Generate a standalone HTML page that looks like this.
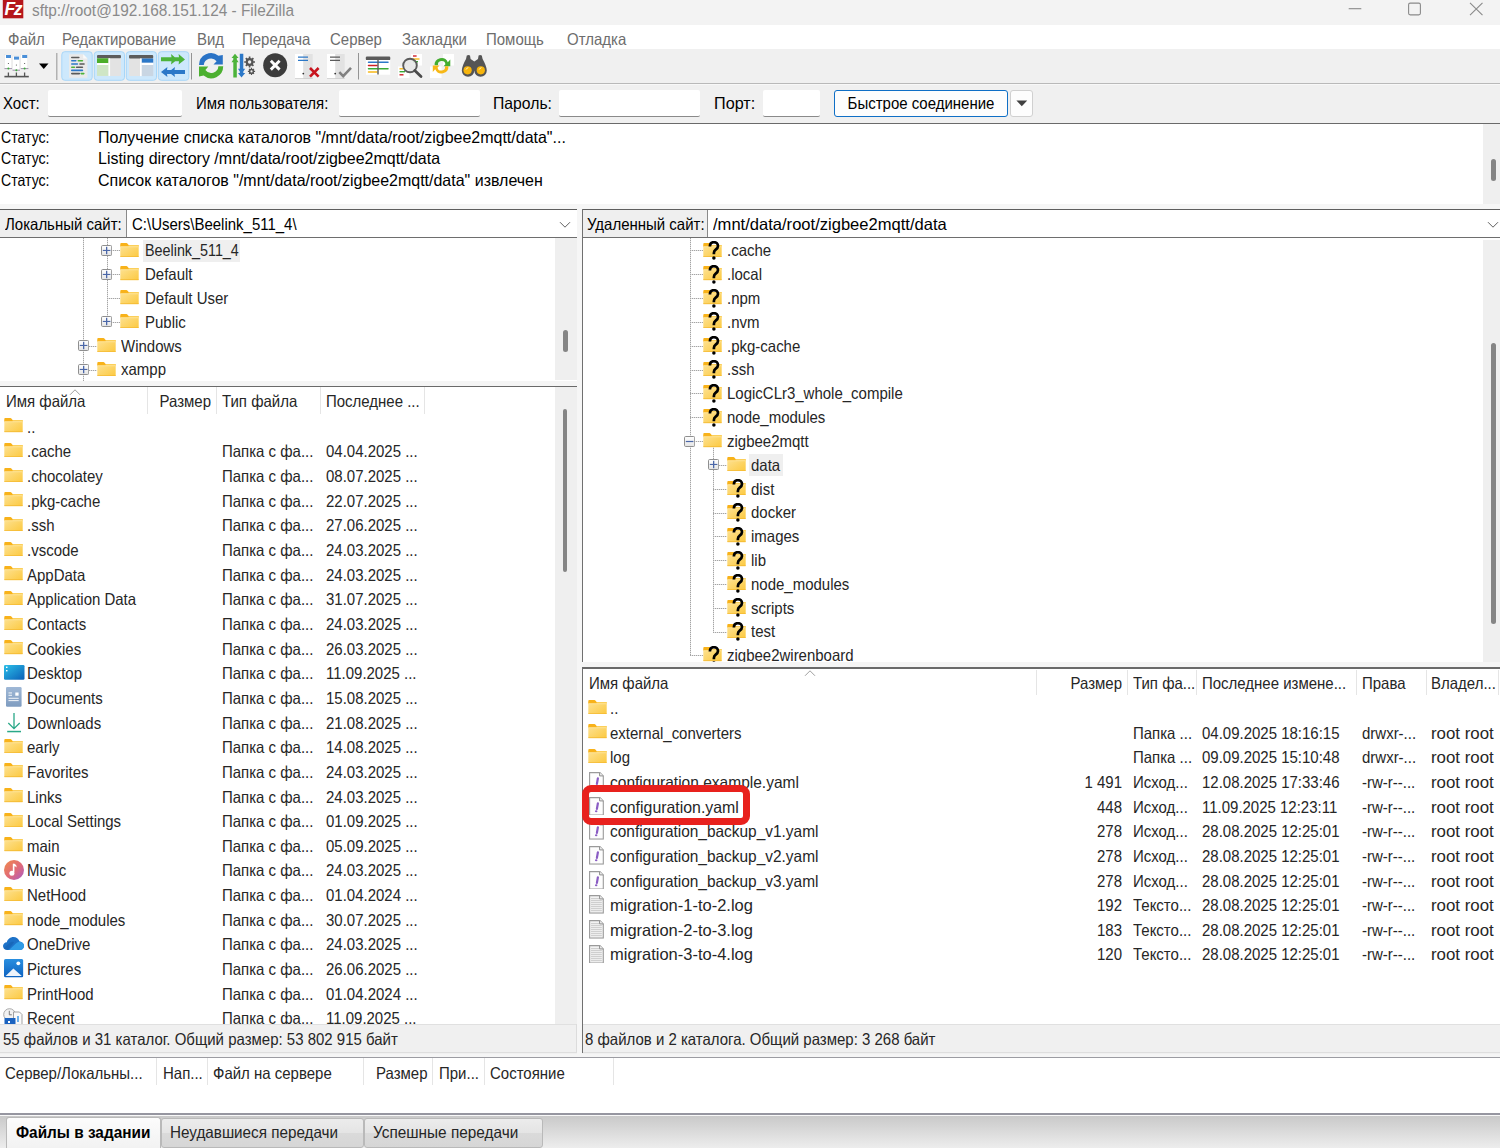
<!DOCTYPE html>
<html><head><meta charset="utf-8"><style>
html,body{margin:0;padding:0;}
body{width:1500px;height:1148px;position:relative;overflow:hidden;background:#f0f0f0;font-family:"Liberation Sans",sans-serif;}
body>div,body>svg{position:absolute;}
.t{white-space:pre;}
</style></head><body>
<svg width="0" height="0" style="position:absolute;left:0;top:0">
<defs>
<linearGradient id="gFold" x1="0" y1="0" x2="1" y2="1"><stop offset="0" stop-color="#fde294"/><stop offset="1" stop-color="#fcc940"/></linearGradient>
<linearGradient id="gBox" x1="0" y1="0" x2="0" y2="1"><stop offset="0" stop-color="#ffffff"/><stop offset="1" stop-color="#e4e4e4"/></linearGradient>
<linearGradient id="gDesk" x1="0" y1="0" x2="1" y2="1"><stop offset="0" stop-color="#2cc0e8"/><stop offset="1" stop-color="#0a5fb8"/></linearGradient>
<linearGradient id="gMusic" x1="0" y1="0" x2="1" y2="1"><stop offset="0" stop-color="#f08a4a"/><stop offset="0.55" stop-color="#e06a7a"/><stop offset="1" stop-color="#a85ac8"/></linearGradient>
<linearGradient id="gDoc" x1="0" y1="0" x2="0" y2="1"><stop offset="0" stop-color="#9fb8d6"/><stop offset="1" stop-color="#7f9cc0"/></linearGradient>
<linearGradient id="gPic" x1="0" y1="0" x2="0" y2="1"><stop offset="0" stop-color="#2a8fe0"/><stop offset="1" stop-color="#0d62c0"/></linearGradient>
<symbol id="fold" viewBox="0 0 19 14.5">
 <rect x="0.3" y="2" width="18.4" height="12.2" rx="0.6" fill="url(#gFold)"/>
 <rect x="7.8" y="2" width="10.9" height="1.5" fill="#fbcf5a"/>
 <path d="M0.3,3.4 V1 Q0.3,0.1 1.2,0.1 H6.4 Q7.1,0.1 7.6,0.8 L8.6,2 V3.4 Z" fill="#f8b21a"/>
 <rect x="0.6" y="3.4" width="17.8" height="0.8" fill="#ffe7a0"/>
 <rect x="0.3" y="13.3" width="18.4" height="0.9" fill="#f2b52c" opacity="0.85"/>
</symbol>
<symbol id="qm" viewBox="0 0 20 19">
 <path d="M6.9,5.6 C6.9,2.6 8.6,1.2 10.9,1.2 C13.3,1.2 15,2.8 15,5 C15,6.9 13.9,7.8 12.7,8.7 C11.6,9.5 10.9,10.2 10.9,12 V13.3" fill="none" stroke="#000" stroke-width="2.7"/>
 <circle cx="10.9" cy="17.1" r="1.75" fill="#000"/>
</symbol>
<symbol id="plus" viewBox="0 0 11.2 11">
 <rect x="0.5" y="0.5" width="10.2" height="10" rx="1.2" fill="url(#gBox)" stroke="#8f8f8f" stroke-width="1"/>
 <rect x="1.8" y="4.9" width="7.6" height="1.1" fill="#4b67a8"/>
 <rect x="5" y="1.8" width="1.3" height="7.4" fill="#4b67a8"/>
</symbol>
<symbol id="minus" viewBox="0 0 11.2 11">
 <rect x="0.5" y="0.5" width="10.2" height="10" rx="1.2" fill="url(#gBox)" stroke="#8f8f8f" stroke-width="1"/>
 <rect x="1.8" y="4.9" width="7.6" height="1.2" fill="#4b67a8"/>
</symbol>
<symbol id="yaml" viewBox="0 0 15 18.7">
 <path d="M0.6,0.6 H10.9 L14.3,4 V18.1 H0.6 Z" fill="#fdfdfd" stroke="#9a9a9a" stroke-width="1.1"/>
 <path d="M10.6,0.6 V3.9 H14.3" fill="#f4f4f4" stroke="#8c8c8c" stroke-width="1"/>
 <path d="M8.9,6.3 L7.9,11.9" stroke="#8a5cc4" stroke-width="2.2" stroke-linecap="round"/>
 <ellipse cx="7.2" cy="14.3" rx="1.25" ry="1.05" fill="#8a5cc4"/>
</symbol>
<symbol id="logf" viewBox="0 0 15 18.7">
 <path d="M0.6,0.6 H10.9 L14.3,4 V18.1 H0.6 Z" fill="#f2f2f2" stroke="#9a9a9a" stroke-width="1.1"/>
 <path d="M10.6,0.6 V3.9 H14.3" fill="#f4f4f4" stroke="#8c8c8c" stroke-width="1"/>
 <g fill="#c6c6c6"><rect x="2" y="3.2" width="8" height="0.9"/><rect x="2" y="5.2" width="10.8" height="0.9"/><rect x="2" y="7.2" width="10.8" height="0.9"/><rect x="2" y="9.2" width="10.8" height="0.9"/><rect x="2" y="11.2" width="10.8" height="0.9"/><rect x="2" y="13.2" width="10.8" height="0.9"/><rect x="2" y="15.2" width="10.8" height="0.9"/></g>
</symbol>
<symbol id="desk" viewBox="0 0 21 15">
 <rect x="0" y="0" width="20.5" height="14.8" rx="1.3" fill="url(#gDesk)"/>
 <rect x="2" y="1.6" width="1.5" height="1.4" fill="#fff"/><rect x="2" y="5" width="1.5" height="1.4" fill="#fff"/>
</symbol>
<symbol id="docs" viewBox="0 0 16 20">
 <rect x="0" y="0" width="15.6" height="19.8" rx="1.2" fill="url(#gDoc)"/>
 <g fill="#fff"><rect x="2.5" y="5.5" width="3.5" height="0.9"/><rect x="2.5" y="7.8" width="3.5" height="0.9"/><rect x="9.3" y="5.5" width="3.3" height="3.2"/><rect x="2.5" y="10.8" width="10.2" height="0.9"/><rect x="2.5" y="13.2" width="10.2" height="0.9"/></g>
</symbol>
<symbol id="down" viewBox="0 0 16 20">
 <path d="M8,0 V15.6 M2.3,10 L8,15.6 L13.7,10" fill="none" stroke="#2aa888" stroke-width="1.3"/>
 <rect x="1.2" y="17.8" width="13.8" height="1.5" fill="#2aa888"/>
</symbol>
<symbol id="music" viewBox="0 0 20 20">
 <circle cx="10" cy="10" r="10" fill="url(#gMusic)"/>
 <path d="M9.6,3.8 V12.2" stroke="#fff" stroke-width="1.6"/>
 <circle cx="7.9" cy="13.2" r="2.5" fill="#fff"/>
 <path d="M9.6,3.6 C11.2,4.2 12.8,5.2 12.6,7.4 C12,6.6 11.2,6.3 9.6,6.2 Z" fill="#fff"/>
</symbol>
<symbol id="cloud" viewBox="0 0 21 13">
 <path d="M4.3,13 C1.8,13 0,11.3 0,9.1 C0,7 1.7,5.3 3.8,5.2 C4.7,2.2 7.3,0 10.4,0 C13.3,0 15.7,1.9 16.6,4.5 C19.2,4.7 21,6.6 21,8.9 C21,11.2 19.1,13 16.7,13 Z" fill="#1d72c8"/>
 <path d="M6,13 L12.8,6.4 C14.3,5.1 15.6,4.6 17.4,4.7 C19.6,5.1 21,6.8 21,8.9 C21,11.2 19.1,13 16.7,13 Z" fill="#2f9be6"/>
 <path d="M0.6,11.2 L7.2,5.6 C8.4,4.7 9.9,4.6 11,5.2 L4.8,13 H4.3 C2.6,13 1.3,12.3 0.6,11.2 Z" fill="#1560b0" opacity="0.6"/>
</symbol>
<symbol id="pics" viewBox="0 0 19.5 18.5">
 <rect x="0" y="0" width="19.3" height="18.4" rx="1.6" fill="url(#gPic)"/>
 <path d="M1.6,17 L9.4,9.6 L17.8,17 Z" fill="#eef4fb"/>
 <circle cx="14.3" cy="4.3" r="1.9" fill="#fff"/>
</symbol>
<symbol id="recent" viewBox="0 0 21 17">
 <circle cx="6.5" cy="6.5" r="5.8" fill="#f2f2f2" stroke="#a0a0a0" stroke-width="0.9"/>
 <path d="M6.3,2.8 V6.8 H8.8" fill="none" stroke="#707070" stroke-width="0.9"/>
 <path d="M10.5,4 H16.5 L19,6.5 V17 H10.5 Z" fill="#fafafa" stroke="#999" stroke-width="0.9"/>
 <rect x="1.5" y="10" width="11" height="7" fill="#1b63c0"/>
 <rect x="14" y="8" width="2" height="6" fill="#6fb1ea"/>
 <rect x="5" y="13" width="2" height="2" fill="#fff"/>
</symbol>
</defs></svg>
<div style="left:0px;top:0px;width:1500px;height:25px;background:#f3f3f3"></div>
<div style="left:0px;top:25px;width:1500px;height:24px;background:#fff"></div>
<div style="left:0px;top:49px;width:1500px;height:34px;background:#f0f0f0"></div>
<div style="left:0px;top:83px;width:1500px;height:1px;background:#b9b9b9"></div>
<div style="left:0px;top:84px;width:1500px;height:1px;background:#f8f8f8"></div>
<div style="left:0px;top:85px;width:1500px;height:38px;background:#f0f0f0"></div>
<div style="left:0px;top:123px;width:1500px;height:1px;background:#6a6a6a"></div>
<div style="left:0px;top:124px;width:1500px;height:80px;background:#fff"></div>
<div style="left:1483px;top:124px;width:17px;height:80px;background:#efefef"></div>
<div style="left:1491px;top:159px;width:4.5px;height:22px;background:#858585;border-radius:3px"></div>
<div style="left:0px;top:204px;width:1500px;height:5px;background:#f6f6f6"></div>
<div style="left:0px;top:209px;width:577px;height:1.7px;background:#5e5e5e"></div>
<div style="left:0px;top:210.2px;width:125.5px;height:27px;background:#efefef"></div>
<div style="left:125.5px;top:210.2px;width:1px;height:27px;background:#8a8a8a"></div>
<div style="left:126.5px;top:210.2px;width:450.5px;height:27px;background:#fff"></div>
<div style="left:0px;top:237px;width:577px;height:1.3px;background:#6e6e6e"></div>
<div style="left:582px;top:209px;width:918px;height:1.7px;background:#5e5e5e"></div>
<div style="left:583px;top:210.2px;width:123.5px;height:27px;background:#efefef"></div>
<div style="left:706.5px;top:210.2px;width:1px;height:27px;background:#8a8a8a"></div>
<div style="left:707.5px;top:210.2px;width:792.5px;height:27px;background:#fff"></div>
<div style="left:582px;top:237px;width:918px;height:1.3px;background:#6e6e6e"></div>
<div style="left:577px;top:209px;width:5px;height:848px;background:#f6f6f6"></div>
<div style="left:582px;top:209px;width:1.3px;height:453px;background:#707070"></div>
<div style="left:582px;top:667.5px;width:1.3px;height:385px;background:#707070"></div>
<div style="left:0px;top:238px;width:577px;height:142.5px;background:#fff"></div>
<div style="left:554.5px;top:238px;width:22px;height:142px;background:#efefef"></div>
<div style="left:563.3px;top:329.5px;width:4.4px;height:22px;background:#858585;border-radius:3px"></div>
<div style="left:0px;top:380.5px;width:577px;height:5.3px;background:#f5f5f5"></div>
<div style="left:0px;top:385.6px;width:577px;height:1.7px;background:#6a6a6a"></div>
<div style="left:0px;top:387px;width:577px;height:637px;background:#fff"></div>
<div style="left:554.5px;top:387px;width:22px;height:637px;background:#efefef"></div>
<div style="left:563.2px;top:409px;width:4.3px;height:163px;background:#858585;border-radius:3px"></div>
<div style="left:583.3px;top:238px;width:917px;height:424px;background:#fff"></div>
<div style="left:1483px;top:240px;width:17px;height:422px;background:#efefef"></div>
<div style="left:1491px;top:342.7px;width:4.6px;height:281px;background:#858585;border-radius:3px"></div>
<div style="left:583.3px;top:662px;width:917px;height:5.5px;background:#f5f5f5"></div>
<div style="left:583.3px;top:667px;width:917px;height:1.3px;background:#6d6d6d"></div>
<div style="left:583.3px;top:668.3px;width:917px;height:356px;background:#fff"></div>
<div style="left:0px;top:1024px;width:577px;height:30px;background:#f0f0f0"></div>
<div style="left:583.3px;top:1024px;width:917px;height:30px;background:#f0f0f0"></div>
<div style="left:0px;top:1054px;width:1500px;height:3px;background:#f5f5f5"></div>
<div style="left:0px;top:1056.6px;width:1500px;height:1.4px;background:#9c9ca2"></div>
<div style="left:0px;top:1058px;width:1500px;height:56px;background:#fff"></div>
<div style="left:0px;top:1113px;width:1500px;height:2px;background:#9696a0"></div>
<div style="left:0px;top:1115px;width:1500px;height:1px;background:#f8f8f8"></div>
<div style="left:0px;top:1116px;width:1500px;height:32px;background:linear-gradient(#c9c9c9,#ededed)"></div>
<div class="t" style="top:0.02px;font-size:16.093px;line-height:20px;color:#8a8a8a;left:31.7px;transform:scaleX(0.9569377990430623);transform-origin:left center;">sftp://root@192.168.151.124 - FileZilla</div>
<div class="t" style="top:29.87px;font-size:15.674999999999999px;line-height:20px;color:#6d6d6d;left:8.3px;transform:scaleX(0.9569377990430623);transform-origin:left center;">Файл</div>
<div class="t" style="top:29.87px;font-size:15.674999999999999px;line-height:20px;color:#6d6d6d;left:62px;transform:scaleX(0.9569377990430623);transform-origin:left center;">Редактирование</div>
<div class="t" style="top:29.87px;font-size:15.674999999999999px;line-height:20px;color:#6d6d6d;left:197px;transform:scaleX(0.9569377990430623);transform-origin:left center;">Вид</div>
<div class="t" style="top:29.87px;font-size:15.674999999999999px;line-height:20px;color:#6d6d6d;left:242px;transform:scaleX(0.9569377990430623);transform-origin:left center;">Передача</div>
<div class="t" style="top:29.87px;font-size:15.674999999999999px;line-height:20px;color:#6d6d6d;left:330px;transform:scaleX(0.9569377990430623);transform-origin:left center;">Сервер</div>
<div class="t" style="top:29.87px;font-size:15.674999999999999px;line-height:20px;color:#6d6d6d;left:402px;transform:scaleX(0.9569377990430623);transform-origin:left center;">Закладки</div>
<div class="t" style="top:29.87px;font-size:15.674999999999999px;line-height:20px;color:#6d6d6d;left:486px;transform:scaleX(0.9569377990430623);transform-origin:left center;">Помощь</div>
<div class="t" style="top:29.87px;font-size:15.674999999999999px;line-height:20px;color:#6d6d6d;left:567px;transform:scaleX(0.9569377990430623);transform-origin:left center;">Отладка</div>
<div class="t" style="top:94.47px;font-size:15.674999999999999px;line-height:20px;color:#000;left:3px;transform:scaleX(0.9569377990430623);transform-origin:left center;">Хост:</div>
<div class="t" style="top:94.47px;font-size:15.674999999999999px;line-height:20px;color:#000;left:196px;transform:scaleX(0.9569377990430623);transform-origin:left center;">Имя пользователя:</div>
<div class="t" style="top:94.47px;font-size:15.674999999999999px;line-height:20px;color:#000;left:493px;transform:scaleX(1.0047846889952154);transform-origin:left center;">Пароль:</div>
<div class="t" style="top:94.47px;font-size:15.674999999999999px;line-height:20px;color:#000;left:714px;transform:scaleX(1.0334928229665072);transform-origin:left center;">Порт:</div>
<div style="left:47.5px;top:90.4px;width:134.5px;height:27px;background:#fff;border-bottom:1px solid #8a8a8a;box-sizing:border-box;border-radius:2px"></div>
<div style="left:339px;top:90.4px;width:141px;height:27px;background:#fff;border-bottom:1px solid #8a8a8a;box-sizing:border-box;border-radius:2px"></div>
<div style="left:559px;top:90.4px;width:141px;height:27px;background:#fff;border-bottom:1px solid #8a8a8a;box-sizing:border-box;border-radius:2px"></div>
<div style="left:762.7px;top:90.4px;width:57.3px;height:27px;background:#fff;border-bottom:1px solid #8a8a8a;box-sizing:border-box;border-radius:2px"></div>
<div style="left:834px;top:90.4px;width:173.7px;height:27.1px;background:#fdfdfd;border:1px solid #0f6fc6;box-sizing:border-box;border-radius:3px"></div>
<div class="t" style="top:94.47px;font-size:15.674999999999999px;line-height:20px;color:#000;left:620.5px;width:600px;text-align:center;transform:scaleX(0.9569377990430623);transform-origin:center center;">Быстрое соединение</div>
<div style="left:1009.7px;top:90.4px;width:23.3px;height:27.1px;background:#fdfdfd;border:1px solid #d0d0d0;box-sizing:border-box;border-radius:3px"></div>
<div class="t" style="top:128.00px;font-size:16.72px;line-height:20px;color:#000;left:1.2px;transform:scaleX(0.8449760765550239);transform-origin:left center;">Статус:</div>
<div class="t" style="top:128.00px;font-size:16.72px;line-height:20px;color:#000;left:97.5px;transform:scaleX(0.9569377990430623);transform-origin:left center;">Получение списка каталогов "/mnt/data/root/zigbee2mqtt/data"...</div>
<div class="t" style="top:149.40px;font-size:16.72px;line-height:20px;color:#000;left:1.2px;transform:scaleX(0.8449760765550239);transform-origin:left center;">Статус:</div>
<div class="t" style="top:149.40px;font-size:16.72px;line-height:20px;color:#000;left:97.5px;transform:scaleX(0.9569377990430623);transform-origin:left center;">Listing directory /mnt/data/root/zigbee2mqtt/data</div>
<div class="t" style="top:170.80px;font-size:16.72px;line-height:20px;color:#000;left:1.2px;transform:scaleX(0.8449760765550239);transform-origin:left center;">Статус:</div>
<div class="t" style="top:170.80px;font-size:16.72px;line-height:20px;color:#000;left:97.5px;transform:scaleX(0.9569377990430623);transform-origin:left center;">Список каталогов "/mnt/data/root/zigbee2mqtt/data" извлечен</div>
<div class="t" style="top:215.27px;font-size:15.674999999999999px;line-height:20px;color:#000;left:5px;transform:scaleX(0.9569377990430623);transform-origin:left center;">Локальный сайт:</div>
<div class="t" style="top:215.27px;font-size:15.674999999999999px;line-height:20px;color:#000;left:132px;transform:scaleX(0.9569377990430623);transform-origin:left center;">C:\Users\Beelink_511_4\</div>
<div class="t" style="top:215.27px;font-size:15.674999999999999px;line-height:20px;color:#000;left:587px;transform:scaleX(0.9569377990430623);transform-origin:left center;">Удаленный сайт:</div>
<div class="t" style="top:215.27px;font-size:15.674999999999999px;line-height:20px;color:#000;left:713px;transform:scaleX(1.0574162679425838);transform-origin:left center;">/mnt/data/root/zigbee2mqtt/data</div>
<div style="left:83px;top:238px;width:1px;height:142.5px;background:repeating-linear-gradient(to bottom,#a4a4a4 0 1px,#e2e2e2 1px 2px)"></div>
<div style="left:106.5px;top:238px;width:1px;height:84.15999999999997px;background:repeating-linear-gradient(to bottom,#a4a4a4 0 1px,#e2e2e2 1px 2px)"></div>
<div style="left:143px;top:240.0px;width:97px;height:21.5px;background:#efefef"></div>
<div style="left:106.6px;top:250px;width:13.400000000000006px;height:1px;background:repeating-linear-gradient(to right,#a4a4a4 0 1px,#e2e2e2 1px 2px)"></div>
<svg style="position:absolute;left:101.1px;top:245.0px" width="11.2" height="11"><use href="#plus" width="11.2" height="11"/></svg>
<svg style="position:absolute;left:120px;top:242.5px" width="19" height="14.5"><use href="#fold" width="19" height="14.5"/></svg>
<div class="t" style="top:241.27px;font-size:15.674999999999999px;line-height:20px;color:#262626;left:145px;transform:scaleX(0.9157894736842106);transform-origin:left center;">Beelink_511_4</div>
<div style="left:106.6px;top:274px;width:13.400000000000006px;height:1px;background:repeating-linear-gradient(to right,#a4a4a4 0 1px,#e2e2e2 1px 2px)"></div>
<svg style="position:absolute;left:101.1px;top:268.82px" width="11.2" height="11"><use href="#plus" width="11.2" height="11"/></svg>
<svg style="position:absolute;left:120px;top:266.32px" width="19" height="14.5"><use href="#fold" width="19" height="14.5"/></svg>
<div class="t" style="top:265.09px;font-size:15.674999999999999px;line-height:20px;color:#262626;left:145px;transform:scaleX(0.9569377990430623);transform-origin:left center;">Default</div>
<div style="left:106.6px;top:298px;width:13.400000000000006px;height:1px;background:repeating-linear-gradient(to right,#a4a4a4 0 1px,#e2e2e2 1px 2px)"></div>
<svg style="position:absolute;left:120px;top:290.14px" width="19" height="14.5"><use href="#fold" width="19" height="14.5"/></svg>
<div class="t" style="top:288.91px;font-size:15.674999999999999px;line-height:20px;color:#262626;left:145px;transform:scaleX(0.9569377990430623);transform-origin:left center;">Default User</div>
<div style="left:106.6px;top:322px;width:13.400000000000006px;height:1px;background:repeating-linear-gradient(to right,#a4a4a4 0 1px,#e2e2e2 1px 2px)"></div>
<svg style="position:absolute;left:101.1px;top:316.46px" width="11.2" height="11"><use href="#plus" width="11.2" height="11"/></svg>
<svg style="position:absolute;left:120px;top:313.96px" width="19" height="14.5"><use href="#fold" width="19" height="14.5"/></svg>
<div class="t" style="top:312.73px;font-size:15.674999999999999px;line-height:20px;color:#262626;left:145px;transform:scaleX(0.9569377990430623);transform-origin:left center;">Public</div>
<div style="left:83.3px;top:346px;width:13.400000000000006px;height:1px;background:repeating-linear-gradient(to right,#a4a4a4 0 1px,#e2e2e2 1px 2px)"></div>
<svg style="position:absolute;left:77.8px;top:340.28000000000003px" width="11.2" height="11"><use href="#plus" width="11.2" height="11"/></svg>
<svg style="position:absolute;left:96.7px;top:337.78000000000003px" width="19" height="14.5"><use href="#fold" width="19" height="14.5"/></svg>
<div class="t" style="top:336.55px;font-size:15.674999999999999px;line-height:20px;color:#262626;left:121px;transform:scaleX(0.9569377990430623);transform-origin:left center;">Windows</div>
<div style="left:83.3px;top:370px;width:13.400000000000006px;height:1px;background:repeating-linear-gradient(to right,#a4a4a4 0 1px,#e2e2e2 1px 2px)"></div>
<svg style="position:absolute;left:77.8px;top:364.09999999999997px" width="11.2" height="11"><use href="#plus" width="11.2" height="11"/></svg>
<svg style="position:absolute;left:96.7px;top:361.59999999999997px" width="19" height="14.5"><use href="#fold" width="19" height="14.5"/></svg>
<div class="t" style="top:360.37px;font-size:15.674999999999999px;line-height:20px;color:#262626;left:121px;transform:scaleX(0.9569377990430623);transform-origin:left center;">xampp</div>
<div style="left:689.5px;top:238px;width:1px;height:417.44000000000005px;background:repeating-linear-gradient(to bottom,#a4a4a4 0 1px,#e2e2e2 1px 2px)"></div>
<div style="left:713px;top:446.46000000000004px;width:1px;height:185.15999999999997px;background:repeating-linear-gradient(to bottom,#a4a4a4 0 1px,#e2e2e2 1px 2px)"></div>
<div style="left:689.5px;top:250px;width:13.5px;height:1px;background:repeating-linear-gradient(to right,#a4a4a4 0 1px,#e2e2e2 1px 2px)"></div>
<svg style="position:absolute;left:703px;top:242.5px" width="19" height="14.5"><use href="#fold" width="19" height="14.5"/></svg>
<svg style="position:absolute;left:703px;top:241.0px" width="20" height="19"><use href="#qm" width="20" height="19"/></svg>
<div class="t" style="top:241.37px;font-size:15.674999999999999px;line-height:20px;color:#262626;left:727px;transform:scaleX(0.9569377990430623);transform-origin:left center;">.cache</div>
<div style="left:689.5px;top:274px;width:13.5px;height:1px;background:repeating-linear-gradient(to right,#a4a4a4 0 1px,#e2e2e2 1px 2px)"></div>
<svg style="position:absolute;left:703px;top:266.32000000000005px" width="19" height="14.5"><use href="#fold" width="19" height="14.5"/></svg>
<svg style="position:absolute;left:703px;top:264.82000000000005px" width="20" height="19"><use href="#qm" width="20" height="19"/></svg>
<div class="t" style="top:265.19px;font-size:15.674999999999999px;line-height:20px;color:#262626;left:727px;transform:scaleX(0.9569377990430623);transform-origin:left center;">.local</div>
<div style="left:689.5px;top:298px;width:13.5px;height:1px;background:repeating-linear-gradient(to right,#a4a4a4 0 1px,#e2e2e2 1px 2px)"></div>
<svg style="position:absolute;left:703px;top:290.14000000000004px" width="19" height="14.5"><use href="#fold" width="19" height="14.5"/></svg>
<svg style="position:absolute;left:703px;top:288.64000000000004px" width="20" height="19"><use href="#qm" width="20" height="19"/></svg>
<div class="t" style="top:289.01px;font-size:15.674999999999999px;line-height:20px;color:#262626;left:727px;transform:scaleX(0.9569377990430623);transform-origin:left center;">.npm</div>
<div style="left:689.5px;top:322px;width:13.5px;height:1px;background:repeating-linear-gradient(to right,#a4a4a4 0 1px,#e2e2e2 1px 2px)"></div>
<svg style="position:absolute;left:703px;top:313.96000000000004px" width="19" height="14.5"><use href="#fold" width="19" height="14.5"/></svg>
<svg style="position:absolute;left:703px;top:312.46000000000004px" width="20" height="19"><use href="#qm" width="20" height="19"/></svg>
<div class="t" style="top:312.83px;font-size:15.674999999999999px;line-height:20px;color:#262626;left:727px;transform:scaleX(0.9569377990430623);transform-origin:left center;">.nvm</div>
<div style="left:689.5px;top:346px;width:13.5px;height:1px;background:repeating-linear-gradient(to right,#a4a4a4 0 1px,#e2e2e2 1px 2px)"></div>
<svg style="position:absolute;left:703px;top:337.78000000000003px" width="19" height="14.5"><use href="#fold" width="19" height="14.5"/></svg>
<svg style="position:absolute;left:703px;top:336.28000000000003px" width="20" height="19"><use href="#qm" width="20" height="19"/></svg>
<div class="t" style="top:336.65px;font-size:15.674999999999999px;line-height:20px;color:#262626;left:727px;transform:scaleX(0.9569377990430623);transform-origin:left center;">.pkg-cache</div>
<div style="left:689.5px;top:370px;width:13.5px;height:1px;background:repeating-linear-gradient(to right,#a4a4a4 0 1px,#e2e2e2 1px 2px)"></div>
<svg style="position:absolute;left:703px;top:361.6px" width="19" height="14.5"><use href="#fold" width="19" height="14.5"/></svg>
<svg style="position:absolute;left:703px;top:360.1px" width="20" height="19"><use href="#qm" width="20" height="19"/></svg>
<div class="t" style="top:360.47px;font-size:15.674999999999999px;line-height:20px;color:#262626;left:727px;transform:scaleX(0.9569377990430623);transform-origin:left center;">.ssh</div>
<div style="left:689.5px;top:393px;width:13.5px;height:1px;background:repeating-linear-gradient(to right,#a4a4a4 0 1px,#e2e2e2 1px 2px)"></div>
<svg style="position:absolute;left:703px;top:385.4200000000001px" width="19" height="14.5"><use href="#fold" width="19" height="14.5"/></svg>
<svg style="position:absolute;left:703px;top:383.9200000000001px" width="20" height="19"><use href="#qm" width="20" height="19"/></svg>
<div class="t" style="top:384.29px;font-size:15.674999999999999px;line-height:20px;color:#262626;left:727px;transform:scaleX(0.9569377990430623);transform-origin:left center;">LogicCLr3_whole_compile</div>
<div style="left:689.5px;top:417px;width:13.5px;height:1px;background:repeating-linear-gradient(to right,#a4a4a4 0 1px,#e2e2e2 1px 2px)"></div>
<svg style="position:absolute;left:703px;top:409.24px" width="19" height="14.5"><use href="#fold" width="19" height="14.5"/></svg>
<svg style="position:absolute;left:703px;top:407.74px" width="20" height="19"><use href="#qm" width="20" height="19"/></svg>
<div class="t" style="top:408.11px;font-size:15.674999999999999px;line-height:20px;color:#262626;left:727px;transform:scaleX(0.9569377990430623);transform-origin:left center;">node_modules</div>
<div style="left:689.5px;top:441px;width:13.5px;height:1px;background:repeating-linear-gradient(to right,#a4a4a4 0 1px,#e2e2e2 1px 2px)"></div>
<svg style="position:absolute;left:684.2px;top:435.66px" width="11.2" height="11"><use href="#minus" width="11.2" height="11"/></svg>
<svg style="position:absolute;left:703px;top:433.06000000000006px" width="19" height="14.5"><use href="#fold" width="19" height="14.5"/></svg>
<div class="t" style="top:431.93px;font-size:15.674999999999999px;line-height:20px;color:#262626;left:727px;transform:scaleX(0.9569377990430623);transform-origin:left center;">zigbee2mqtt</div>
<div style="left:749px;top:454.47999999999996px;width:34px;height:21.5px;background:#efefef"></div>
<div style="left:713px;top:465px;width:14px;height:1px;background:repeating-linear-gradient(to right,#a4a4a4 0 1px,#e2e2e2 1px 2px)"></div>
<svg style="position:absolute;left:707.5px;top:459.47999999999996px" width="11.2" height="11"><use href="#plus" width="11.2" height="11"/></svg>
<svg style="position:absolute;left:727px;top:456.88px" width="19" height="14.5"><use href="#fold" width="19" height="14.5"/></svg>
<div class="t" style="top:455.75px;font-size:15.674999999999999px;line-height:20px;color:#262626;left:751px;transform:scaleX(0.9569377990430623);transform-origin:left center;">data</div>
<div style="left:713px;top:489px;width:14px;height:1px;background:repeating-linear-gradient(to right,#a4a4a4 0 1px,#e2e2e2 1px 2px)"></div>
<svg style="position:absolute;left:727px;top:480.70000000000005px" width="19" height="14.5"><use href="#fold" width="19" height="14.5"/></svg>
<svg style="position:absolute;left:727px;top:479.20000000000005px" width="20" height="19"><use href="#qm" width="20" height="19"/></svg>
<div class="t" style="top:479.57px;font-size:15.674999999999999px;line-height:20px;color:#262626;left:751px;transform:scaleX(0.9569377990430623);transform-origin:left center;">dist</div>
<div style="left:713px;top:513px;width:14px;height:1px;background:repeating-linear-gradient(to right,#a4a4a4 0 1px,#e2e2e2 1px 2px)"></div>
<svg style="position:absolute;left:727px;top:504.52px" width="19" height="14.5"><use href="#fold" width="19" height="14.5"/></svg>
<svg style="position:absolute;left:727px;top:503.02px" width="20" height="19"><use href="#qm" width="20" height="19"/></svg>
<div class="t" style="top:503.39px;font-size:15.674999999999999px;line-height:20px;color:#262626;left:751px;transform:scaleX(0.9569377990430623);transform-origin:left center;">docker</div>
<div style="left:713px;top:536px;width:14px;height:1px;background:repeating-linear-gradient(to right,#a4a4a4 0 1px,#e2e2e2 1px 2px)"></div>
<svg style="position:absolute;left:727px;top:528.34px" width="19" height="14.5"><use href="#fold" width="19" height="14.5"/></svg>
<svg style="position:absolute;left:727px;top:526.84px" width="20" height="19"><use href="#qm" width="20" height="19"/></svg>
<div class="t" style="top:527.21px;font-size:15.674999999999999px;line-height:20px;color:#262626;left:751px;transform:scaleX(0.9569377990430623);transform-origin:left center;">images</div>
<div style="left:713px;top:560px;width:14px;height:1px;background:repeating-linear-gradient(to right,#a4a4a4 0 1px,#e2e2e2 1px 2px)"></div>
<svg style="position:absolute;left:727px;top:552.1600000000001px" width="19" height="14.5"><use href="#fold" width="19" height="14.5"/></svg>
<svg style="position:absolute;left:727px;top:550.6600000000001px" width="20" height="19"><use href="#qm" width="20" height="19"/></svg>
<div class="t" style="top:551.03px;font-size:15.674999999999999px;line-height:20px;color:#262626;left:751px;transform:scaleX(0.9569377990430623);transform-origin:left center;">lib</div>
<div style="left:713px;top:584px;width:14px;height:1px;background:repeating-linear-gradient(to right,#a4a4a4 0 1px,#e2e2e2 1px 2px)"></div>
<svg style="position:absolute;left:727px;top:575.98px" width="19" height="14.5"><use href="#fold" width="19" height="14.5"/></svg>
<svg style="position:absolute;left:727px;top:574.48px" width="20" height="19"><use href="#qm" width="20" height="19"/></svg>
<div class="t" style="top:574.85px;font-size:15.674999999999999px;line-height:20px;color:#262626;left:751px;transform:scaleX(0.9569377990430623);transform-origin:left center;">node_modules</div>
<div style="left:713px;top:608px;width:14px;height:1px;background:repeating-linear-gradient(to right,#a4a4a4 0 1px,#e2e2e2 1px 2px)"></div>
<svg style="position:absolute;left:727px;top:599.8000000000001px" width="19" height="14.5"><use href="#fold" width="19" height="14.5"/></svg>
<svg style="position:absolute;left:727px;top:598.3000000000001px" width="20" height="19"><use href="#qm" width="20" height="19"/></svg>
<div class="t" style="top:598.67px;font-size:15.674999999999999px;line-height:20px;color:#262626;left:751px;transform:scaleX(0.9569377990430623);transform-origin:left center;">scripts</div>
<div style="left:713px;top:632px;width:14px;height:1px;background:repeating-linear-gradient(to right,#a4a4a4 0 1px,#e2e2e2 1px 2px)"></div>
<svg style="position:absolute;left:727px;top:623.62px" width="19" height="14.5"><use href="#fold" width="19" height="14.5"/></svg>
<svg style="position:absolute;left:727px;top:622.12px" width="20" height="19"><use href="#qm" width="20" height="19"/></svg>
<div class="t" style="top:622.49px;font-size:15.674999999999999px;line-height:20px;color:#262626;left:751px;transform:scaleX(0.9569377990430623);transform-origin:left center;">test</div>
<div style="left:689.5px;top:655px;width:13.5px;height:1px;background:repeating-linear-gradient(to right,#a4a4a4 0 1px,#e2e2e2 1px 2px)"></div>
<svg style="position:absolute;left:703px;top:647.44px" width="19" height="14.5"><use href="#fold" width="19" height="14.5"/></svg>
<svg style="position:absolute;left:703px;top:645.94px" width="20" height="19"><use href="#qm" width="20" height="19"/></svg>
<div class="t" style="top:646.31px;font-size:15.674999999999999px;line-height:20px;color:#262626;left:727px;transform:scaleX(0.9569377990430623);transform-origin:left center;">zigbee2wirenboard</div>
<div class="t" style="top:391.77px;font-size:15.674999999999999px;line-height:20px;color:#262626;left:6px;transform:scaleX(0.9569377990430623);transform-origin:left center;">Имя файла</div>
<div class="t" style="top:391.77px;font-size:15.674999999999999px;line-height:20px;color:#262626;left:-389.5px;width:600px;text-align:right;transform:scaleX(0.9569377990430623);transform-origin:right center;">Размер</div>
<div class="t" style="top:391.77px;font-size:15.674999999999999px;line-height:20px;color:#262626;left:222px;transform:scaleX(0.9569377990430623);transform-origin:left center;">Тип файла</div>
<div class="t" style="top:391.77px;font-size:15.674999999999999px;line-height:20px;color:#262626;left:325.6px;transform:scaleX(0.9569377990430623);transform-origin:left center;">Последнее ...</div>
<div style="left:147px;top:387px;width:1px;height:27px;background:#e5e5e5"></div>
<div style="left:215.6px;top:387px;width:1px;height:27px;background:#e5e5e5"></div>
<div style="left:319.6px;top:387px;width:1px;height:27px;background:#e5e5e5"></div>
<div style="left:423.6px;top:387px;width:1px;height:27px;background:#e5e5e5"></div>
<svg style="position:absolute;left:4.3px;top:418.3px" width="19" height="14.5"><use href="#fold" width="19" height="14.5"/></svg>
<div class="t" style="top:417.77px;font-size:15.674999999999999px;line-height:20px;color:#262626;left:26.5px;transform:scaleX(0.9569377990430623);transform-origin:left center;">..</div>
<svg style="position:absolute;left:4.3px;top:442.95px" width="19" height="14.5"><use href="#fold" width="19" height="14.5"/></svg>
<div class="t" style="top:442.42px;font-size:15.674999999999999px;line-height:20px;color:#262626;left:26.5px;transform:scaleX(0.9569377990430623);transform-origin:left center;">.cache</div>
<div class="t" style="top:442.42px;font-size:15.674999999999999px;line-height:20px;color:#262626;left:222px;transform:scaleX(0.9569377990430623);transform-origin:left center;">Папка с фа...</div>
<div class="t" style="top:442.42px;font-size:15.674999999999999px;line-height:20px;color:#262626;left:325.6px;transform:scaleX(0.9569377990430623);transform-origin:left center;">04.04.2025 ...</div>
<svg style="position:absolute;left:4.3px;top:467.6px" width="19" height="14.5"><use href="#fold" width="19" height="14.5"/></svg>
<div class="t" style="top:467.07px;font-size:15.674999999999999px;line-height:20px;color:#262626;left:26.5px;transform:scaleX(0.9569377990430623);transform-origin:left center;">.chocolatey</div>
<div class="t" style="top:467.07px;font-size:15.674999999999999px;line-height:20px;color:#262626;left:222px;transform:scaleX(0.9569377990430623);transform-origin:left center;">Папка с фа...</div>
<div class="t" style="top:467.07px;font-size:15.674999999999999px;line-height:20px;color:#262626;left:325.6px;transform:scaleX(0.9569377990430623);transform-origin:left center;">08.07.2025 ...</div>
<svg style="position:absolute;left:4.3px;top:492.25px" width="19" height="14.5"><use href="#fold" width="19" height="14.5"/></svg>
<div class="t" style="top:491.72px;font-size:15.674999999999999px;line-height:20px;color:#262626;left:26.5px;transform:scaleX(0.9569377990430623);transform-origin:left center;">.pkg-cache</div>
<div class="t" style="top:491.72px;font-size:15.674999999999999px;line-height:20px;color:#262626;left:222px;transform:scaleX(0.9569377990430623);transform-origin:left center;">Папка с фа...</div>
<div class="t" style="top:491.72px;font-size:15.674999999999999px;line-height:20px;color:#262626;left:325.6px;transform:scaleX(0.9569377990430623);transform-origin:left center;">22.07.2025 ...</div>
<svg style="position:absolute;left:4.3px;top:516.9px" width="19" height="14.5"><use href="#fold" width="19" height="14.5"/></svg>
<div class="t" style="top:516.37px;font-size:15.674999999999999px;line-height:20px;color:#262626;left:26.5px;transform:scaleX(0.9569377990430623);transform-origin:left center;">.ssh</div>
<div class="t" style="top:516.37px;font-size:15.674999999999999px;line-height:20px;color:#262626;left:222px;transform:scaleX(0.9569377990430623);transform-origin:left center;">Папка с фа...</div>
<div class="t" style="top:516.37px;font-size:15.674999999999999px;line-height:20px;color:#262626;left:325.6px;transform:scaleX(0.9569377990430623);transform-origin:left center;">27.06.2025 ...</div>
<svg style="position:absolute;left:4.3px;top:541.55px" width="19" height="14.5"><use href="#fold" width="19" height="14.5"/></svg>
<div class="t" style="top:541.02px;font-size:15.674999999999999px;line-height:20px;color:#262626;left:26.5px;transform:scaleX(0.9569377990430623);transform-origin:left center;">.vscode</div>
<div class="t" style="top:541.02px;font-size:15.674999999999999px;line-height:20px;color:#262626;left:222px;transform:scaleX(0.9569377990430623);transform-origin:left center;">Папка с фа...</div>
<div class="t" style="top:541.02px;font-size:15.674999999999999px;line-height:20px;color:#262626;left:325.6px;transform:scaleX(0.9569377990430623);transform-origin:left center;">24.03.2025 ...</div>
<svg style="position:absolute;left:4.3px;top:566.2px" width="19" height="14.5"><use href="#fold" width="19" height="14.5"/></svg>
<div class="t" style="top:565.67px;font-size:15.674999999999999px;line-height:20px;color:#262626;left:26.5px;transform:scaleX(0.9569377990430623);transform-origin:left center;">AppData</div>
<div class="t" style="top:565.67px;font-size:15.674999999999999px;line-height:20px;color:#262626;left:222px;transform:scaleX(0.9569377990430623);transform-origin:left center;">Папка с фа...</div>
<div class="t" style="top:565.67px;font-size:15.674999999999999px;line-height:20px;color:#262626;left:325.6px;transform:scaleX(0.9569377990430623);transform-origin:left center;">24.03.2025 ...</div>
<svg style="position:absolute;left:4.3px;top:590.85px" width="19" height="14.5"><use href="#fold" width="19" height="14.5"/></svg>
<div class="t" style="top:590.32px;font-size:15.674999999999999px;line-height:20px;color:#262626;left:26.5px;transform:scaleX(0.9569377990430623);transform-origin:left center;">Application Data</div>
<div class="t" style="top:590.32px;font-size:15.674999999999999px;line-height:20px;color:#262626;left:222px;transform:scaleX(0.9569377990430623);transform-origin:left center;">Папка с фа...</div>
<div class="t" style="top:590.32px;font-size:15.674999999999999px;line-height:20px;color:#262626;left:325.6px;transform:scaleX(0.9569377990430623);transform-origin:left center;">31.07.2025 ...</div>
<svg style="position:absolute;left:4.3px;top:615.5px" width="19" height="14.5"><use href="#fold" width="19" height="14.5"/></svg>
<div class="t" style="top:614.97px;font-size:15.674999999999999px;line-height:20px;color:#262626;left:26.5px;transform:scaleX(0.9569377990430623);transform-origin:left center;">Contacts</div>
<div class="t" style="top:614.97px;font-size:15.674999999999999px;line-height:20px;color:#262626;left:222px;transform:scaleX(0.9569377990430623);transform-origin:left center;">Папка с фа...</div>
<div class="t" style="top:614.97px;font-size:15.674999999999999px;line-height:20px;color:#262626;left:325.6px;transform:scaleX(0.9569377990430623);transform-origin:left center;">24.03.2025 ...</div>
<svg style="position:absolute;left:4.3px;top:640.15px" width="19" height="14.5"><use href="#fold" width="19" height="14.5"/></svg>
<div class="t" style="top:639.62px;font-size:15.674999999999999px;line-height:20px;color:#262626;left:26.5px;transform:scaleX(0.9569377990430623);transform-origin:left center;">Cookies</div>
<div class="t" style="top:639.62px;font-size:15.674999999999999px;line-height:20px;color:#262626;left:222px;transform:scaleX(0.9569377990430623);transform-origin:left center;">Папка с фа...</div>
<div class="t" style="top:639.62px;font-size:15.674999999999999px;line-height:20px;color:#262626;left:325.6px;transform:scaleX(0.9569377990430623);transform-origin:left center;">26.03.2025 ...</div>
<svg style="position:absolute;left:3.7px;top:665.0px" width="21" height="15"><use href="#desk" width="21" height="15"/></svg>
<div class="t" style="top:664.27px;font-size:15.674999999999999px;line-height:20px;color:#262626;left:26.5px;transform:scaleX(0.9569377990430623);transform-origin:left center;">Desktop</div>
<div class="t" style="top:664.27px;font-size:15.674999999999999px;line-height:20px;color:#262626;left:222px;transform:scaleX(0.9569377990430623);transform-origin:left center;">Папка с фа...</div>
<div class="t" style="top:664.27px;font-size:15.674999999999999px;line-height:20px;color:#262626;left:325.6px;transform:scaleX(0.9569377990430623);transform-origin:left center;">11.09.2025 ...</div>
<svg style="position:absolute;left:6px;top:686.95px" width="16" height="20"><use href="#docs" width="16" height="20"/></svg>
<div class="t" style="top:688.92px;font-size:15.674999999999999px;line-height:20px;color:#262626;left:26.5px;transform:scaleX(0.9569377990430623);transform-origin:left center;">Documents</div>
<div class="t" style="top:688.92px;font-size:15.674999999999999px;line-height:20px;color:#262626;left:222px;transform:scaleX(0.9569377990430623);transform-origin:left center;">Папка с фа...</div>
<div class="t" style="top:688.92px;font-size:15.674999999999999px;line-height:20px;color:#262626;left:325.6px;transform:scaleX(0.9569377990430623);transform-origin:left center;">15.08.2025 ...</div>
<svg style="position:absolute;left:6px;top:712.5999999999999px" width="16" height="20"><use href="#down" width="16" height="20"/></svg>
<div class="t" style="top:713.57px;font-size:15.674999999999999px;line-height:20px;color:#262626;left:26.5px;transform:scaleX(0.9569377990430623);transform-origin:left center;">Downloads</div>
<div class="t" style="top:713.57px;font-size:15.674999999999999px;line-height:20px;color:#262626;left:222px;transform:scaleX(0.9569377990430623);transform-origin:left center;">Папка с фа...</div>
<div class="t" style="top:713.57px;font-size:15.674999999999999px;line-height:20px;color:#262626;left:325.6px;transform:scaleX(0.9569377990430623);transform-origin:left center;">21.08.2025 ...</div>
<svg style="position:absolute;left:4.3px;top:738.75px" width="19" height="14.5"><use href="#fold" width="19" height="14.5"/></svg>
<div class="t" style="top:738.22px;font-size:15.674999999999999px;line-height:20px;color:#262626;left:26.5px;transform:scaleX(0.9569377990430623);transform-origin:left center;">early</div>
<div class="t" style="top:738.22px;font-size:15.674999999999999px;line-height:20px;color:#262626;left:222px;transform:scaleX(0.9569377990430623);transform-origin:left center;">Папка с фа...</div>
<div class="t" style="top:738.22px;font-size:15.674999999999999px;line-height:20px;color:#262626;left:325.6px;transform:scaleX(0.9569377990430623);transform-origin:left center;">14.08.2025 ...</div>
<svg style="position:absolute;left:4.3px;top:763.4px" width="19" height="14.5"><use href="#fold" width="19" height="14.5"/></svg>
<div class="t" style="top:762.87px;font-size:15.674999999999999px;line-height:20px;color:#262626;left:26.5px;transform:scaleX(0.9569377990430623);transform-origin:left center;">Favorites</div>
<div class="t" style="top:762.87px;font-size:15.674999999999999px;line-height:20px;color:#262626;left:222px;transform:scaleX(0.9569377990430623);transform-origin:left center;">Папка с фа...</div>
<div class="t" style="top:762.87px;font-size:15.674999999999999px;line-height:20px;color:#262626;left:325.6px;transform:scaleX(0.9569377990430623);transform-origin:left center;">24.03.2025 ...</div>
<svg style="position:absolute;left:4.3px;top:788.05px" width="19" height="14.5"><use href="#fold" width="19" height="14.5"/></svg>
<div class="t" style="top:787.52px;font-size:15.674999999999999px;line-height:20px;color:#262626;left:26.5px;transform:scaleX(0.9569377990430623);transform-origin:left center;">Links</div>
<div class="t" style="top:787.52px;font-size:15.674999999999999px;line-height:20px;color:#262626;left:222px;transform:scaleX(0.9569377990430623);transform-origin:left center;">Папка с фа...</div>
<div class="t" style="top:787.52px;font-size:15.674999999999999px;line-height:20px;color:#262626;left:325.6px;transform:scaleX(0.9569377990430623);transform-origin:left center;">24.03.2025 ...</div>
<svg style="position:absolute;left:4.3px;top:812.7px" width="19" height="14.5"><use href="#fold" width="19" height="14.5"/></svg>
<div class="t" style="top:812.17px;font-size:15.674999999999999px;line-height:20px;color:#262626;left:26.5px;transform:scaleX(0.9569377990430623);transform-origin:left center;">Local Settings</div>
<div class="t" style="top:812.17px;font-size:15.674999999999999px;line-height:20px;color:#262626;left:222px;transform:scaleX(0.9569377990430623);transform-origin:left center;">Папка с фа...</div>
<div class="t" style="top:812.17px;font-size:15.674999999999999px;line-height:20px;color:#262626;left:325.6px;transform:scaleX(0.9569377990430623);transform-origin:left center;">01.09.2025 ...</div>
<svg style="position:absolute;left:4.3px;top:837.3499999999999px" width="19" height="14.5"><use href="#fold" width="19" height="14.5"/></svg>
<div class="t" style="top:836.82px;font-size:15.674999999999999px;line-height:20px;color:#262626;left:26.5px;transform:scaleX(0.9569377990430623);transform-origin:left center;">main</div>
<div class="t" style="top:836.82px;font-size:15.674999999999999px;line-height:20px;color:#262626;left:222px;transform:scaleX(0.9569377990430623);transform-origin:left center;">Папка с фа...</div>
<div class="t" style="top:836.82px;font-size:15.674999999999999px;line-height:20px;color:#262626;left:325.6px;transform:scaleX(0.9569377990430623);transform-origin:left center;">05.09.2025 ...</div>
<svg style="position:absolute;left:3.8px;top:859.6px" width="20" height="20"><use href="#music" width="20" height="20"/></svg>
<div class="t" style="top:861.47px;font-size:15.674999999999999px;line-height:20px;color:#262626;left:26.5px;transform:scaleX(0.9569377990430623);transform-origin:left center;">Music</div>
<div class="t" style="top:861.47px;font-size:15.674999999999999px;line-height:20px;color:#262626;left:222px;transform:scaleX(0.9569377990430623);transform-origin:left center;">Папка с фа...</div>
<div class="t" style="top:861.47px;font-size:15.674999999999999px;line-height:20px;color:#262626;left:325.6px;transform:scaleX(0.9569377990430623);transform-origin:left center;">24.03.2025 ...</div>
<svg style="position:absolute;left:4.3px;top:886.65px" width="19" height="14.5"><use href="#fold" width="19" height="14.5"/></svg>
<div class="t" style="top:886.12px;font-size:15.674999999999999px;line-height:20px;color:#262626;left:26.5px;transform:scaleX(0.9569377990430623);transform-origin:left center;">NetHood</div>
<div class="t" style="top:886.12px;font-size:15.674999999999999px;line-height:20px;color:#262626;left:222px;transform:scaleX(0.9569377990430623);transform-origin:left center;">Папка с фа...</div>
<div class="t" style="top:886.12px;font-size:15.674999999999999px;line-height:20px;color:#262626;left:325.6px;transform:scaleX(0.9569377990430623);transform-origin:left center;">01.04.2024 ...</div>
<svg style="position:absolute;left:4.3px;top:911.3px" width="19" height="14.5"><use href="#fold" width="19" height="14.5"/></svg>
<div class="t" style="top:910.77px;font-size:15.674999999999999px;line-height:20px;color:#262626;left:26.5px;transform:scaleX(0.9569377990430623);transform-origin:left center;">node_modules</div>
<div class="t" style="top:910.77px;font-size:15.674999999999999px;line-height:20px;color:#262626;left:222px;transform:scaleX(0.9569377990430623);transform-origin:left center;">Папка с фа...</div>
<div class="t" style="top:910.77px;font-size:15.674999999999999px;line-height:20px;color:#262626;left:325.6px;transform:scaleX(0.9569377990430623);transform-origin:left center;">30.07.2025 ...</div>
<svg style="position:absolute;left:3.3px;top:937.45px" width="21" height="13"><use href="#cloud" width="21" height="13"/></svg>
<div class="t" style="top:935.42px;font-size:15.674999999999999px;line-height:20px;color:#262626;left:26.5px;transform:scaleX(0.9569377990430623);transform-origin:left center;">OneDrive</div>
<div class="t" style="top:935.42px;font-size:15.674999999999999px;line-height:20px;color:#262626;left:222px;transform:scaleX(0.9569377990430623);transform-origin:left center;">Папка с фа...</div>
<div class="t" style="top:935.42px;font-size:15.674999999999999px;line-height:20px;color:#262626;left:325.6px;transform:scaleX(0.9569377990430623);transform-origin:left center;">24.03.2025 ...</div>
<svg style="position:absolute;left:4.2px;top:959.3px" width="19.5" height="18.5"><use href="#pics" width="19.5" height="18.5"/></svg>
<div class="t" style="top:960.07px;font-size:15.674999999999999px;line-height:20px;color:#262626;left:26.5px;transform:scaleX(0.9569377990430623);transform-origin:left center;">Pictures</div>
<div class="t" style="top:960.07px;font-size:15.674999999999999px;line-height:20px;color:#262626;left:222px;transform:scaleX(0.9569377990430623);transform-origin:left center;">Папка с фа...</div>
<div class="t" style="top:960.07px;font-size:15.674999999999999px;line-height:20px;color:#262626;left:325.6px;transform:scaleX(0.9569377990430623);transform-origin:left center;">26.06.2025 ...</div>
<svg style="position:absolute;left:4.3px;top:985.25px" width="19" height="14.5"><use href="#fold" width="19" height="14.5"/></svg>
<div class="t" style="top:984.72px;font-size:15.674999999999999px;line-height:20px;color:#262626;left:26.5px;transform:scaleX(0.9569377990430623);transform-origin:left center;">PrintHood</div>
<div class="t" style="top:984.72px;font-size:15.674999999999999px;line-height:20px;color:#262626;left:222px;transform:scaleX(0.9569377990430623);transform-origin:left center;">Папка с фа...</div>
<div class="t" style="top:984.72px;font-size:15.674999999999999px;line-height:20px;color:#262626;left:325.6px;transform:scaleX(0.9569377990430623);transform-origin:left center;">01.04.2024 ...</div>
<svg style="position:absolute;left:3px;top:1007.8999999999999px" width="21" height="17"><use href="#recent" width="21" height="17"/></svg>
<div class="t" style="top:1009.37px;font-size:15.674999999999999px;line-height:20px;color:#262626;left:26.5px;transform:scaleX(0.9569377990430623);transform-origin:left center;">Recent</div>
<div class="t" style="top:1009.37px;font-size:15.674999999999999px;line-height:20px;color:#262626;left:222px;transform:scaleX(0.9569377990430623);transform-origin:left center;">Папка с фа...</div>
<div class="t" style="top:1009.37px;font-size:15.674999999999999px;line-height:20px;color:#262626;left:325.6px;transform:scaleX(0.9569377990430623);transform-origin:left center;">11.09.2025 ...</div>
<div class="t" style="top:673.87px;font-size:15.674999999999999px;line-height:20px;color:#262626;left:588.5px;transform:scaleX(0.9569377990430623);transform-origin:left center;">Имя файла</div>
<div class="t" style="top:673.87px;font-size:15.674999999999999px;line-height:20px;color:#262626;left:521.5px;width:600px;text-align:right;transform:scaleX(0.9569377990430623);transform-origin:right center;">Размер</div>
<div class="t" style="top:673.87px;font-size:15.674999999999999px;line-height:20px;color:#262626;left:1132.8px;transform:scaleX(0.9569377990430623);transform-origin:left center;">Тип фа...</div>
<div class="t" style="top:673.87px;font-size:15.674999999999999px;line-height:20px;color:#262626;left:1201.8px;transform:scaleX(0.9569377990430623);transform-origin:left center;">Последнее измене...</div>
<div class="t" style="top:673.87px;font-size:15.674999999999999px;line-height:20px;color:#262626;left:1361.7px;transform:scaleX(0.9569377990430623);transform-origin:left center;">Права</div>
<div class="t" style="top:673.87px;font-size:15.674999999999999px;line-height:20px;color:#262626;left:1431px;transform:scaleX(0.9569377990430623);transform-origin:left center;">Владел...</div>
<div style="left:1036.3px;top:669px;width:1px;height:26px;background:#e5e5e5"></div>
<div style="left:1126.5px;top:669px;width:1px;height:26px;background:#e5e5e5"></div>
<div style="left:1195.5px;top:669px;width:1px;height:26px;background:#e5e5e5"></div>
<div style="left:1356px;top:669px;width:1px;height:26px;background:#e5e5e5"></div>
<div style="left:1425.6px;top:669px;width:1px;height:26px;background:#e5e5e5"></div>
<div style="left:1498.4px;top:669px;width:1px;height:26px;background:#e5e5e5"></div>
<svg style="position:absolute;left:587.5px;top:699.5px" width="19" height="14.5"><use href="#fold" width="19" height="14.5"/></svg>
<div class="t" style="top:698.97px;font-size:15.674999999999999px;line-height:20px;color:#262626;left:609.5px;transform:scaleX(0.9569377990430623);transform-origin:left center;">..</div>
<svg style="position:absolute;left:587.5px;top:724.15px" width="19" height="14.5"><use href="#fold" width="19" height="14.5"/></svg>
<div class="t" style="top:723.62px;font-size:15.674999999999999px;line-height:20px;color:#262626;left:609.5px;transform:scaleX(0.9569377990430623);transform-origin:left center;">external_converters</div>
<div class="t" style="top:723.62px;font-size:15.674999999999999px;line-height:20px;color:#262626;left:1133px;transform:scaleX(0.9569377990430623);transform-origin:left center;">Папка ...</div>
<div class="t" style="top:723.62px;font-size:15.674999999999999px;line-height:20px;color:#262626;left:1201.8px;transform:scaleX(0.9569377990430623);transform-origin:left center;">04.09.2025 18:16:15</div>
<div class="t" style="top:723.62px;font-size:15.674999999999999px;line-height:20px;color:#262626;left:1361.7px;transform:scaleX(0.9569377990430623);transform-origin:left center;">drwxr-...</div>
<div class="t" style="top:723.62px;font-size:15.674999999999999px;line-height:20px;color:#262626;left:1431px;transform:scaleX(1.0765550239234452);transform-origin:left center;">root root</div>
<svg style="position:absolute;left:587.5px;top:748.8px" width="19" height="14.5"><use href="#fold" width="19" height="14.5"/></svg>
<div class="t" style="top:748.27px;font-size:15.674999999999999px;line-height:20px;color:#262626;left:609.5px;transform:scaleX(0.9569377990430623);transform-origin:left center;">log</div>
<div class="t" style="top:748.27px;font-size:15.674999999999999px;line-height:20px;color:#262626;left:1133px;transform:scaleX(0.9569377990430623);transform-origin:left center;">Папка ...</div>
<div class="t" style="top:748.27px;font-size:15.674999999999999px;line-height:20px;color:#262626;left:1201.8px;transform:scaleX(0.9569377990430623);transform-origin:left center;">09.09.2025 15:10:48</div>
<div class="t" style="top:748.27px;font-size:15.674999999999999px;line-height:20px;color:#262626;left:1361.7px;transform:scaleX(0.9569377990430623);transform-origin:left center;">drwxr-...</div>
<div class="t" style="top:748.27px;font-size:15.674999999999999px;line-height:20px;color:#262626;left:1431px;transform:scaleX(1.0765550239234452);transform-origin:left center;">root root</div>
<svg style="position:absolute;left:589px;top:772.0500000000001px" width="15" height="18.7"><use href="#yaml" width="15" height="18.7"/></svg>
<div class="t" style="top:772.92px;font-size:15.674999999999999px;line-height:20px;color:#262626;left:609.5px;transform:scaleX(0.9913875598086125);transform-origin:left center;">configuration.example.yaml</div>
<div class="t" style="top:772.92px;font-size:15.674999999999999px;line-height:20px;color:#262626;left:521.5px;width:600px;text-align:right;transform:scaleX(0.9569377990430623);transform-origin:right center;">1 491</div>
<div class="t" style="top:772.92px;font-size:15.674999999999999px;line-height:20px;color:#262626;left:1133px;transform:scaleX(0.9569377990430623);transform-origin:left center;">Исход...</div>
<div class="t" style="top:772.92px;font-size:15.674999999999999px;line-height:20px;color:#262626;left:1201.8px;transform:scaleX(0.9569377990430623);transform-origin:left center;">12.08.2025 17:33:46</div>
<div class="t" style="top:772.92px;font-size:15.674999999999999px;line-height:20px;color:#262626;left:1361.7px;transform:scaleX(0.9569377990430623);transform-origin:left center;">-rw-r--...</div>
<div class="t" style="top:772.92px;font-size:15.674999999999999px;line-height:20px;color:#262626;left:1431px;transform:scaleX(1.0765550239234452);transform-origin:left center;">root root</div>
<svg style="position:absolute;left:589px;top:796.7px" width="15" height="18.7"><use href="#yaml" width="15" height="18.7"/></svg>
<div class="t" style="top:797.57px;font-size:15.674999999999999px;line-height:20px;color:#262626;left:609.5px;transform:scaleX(1.0143540669856461);transform-origin:left center;">configuration.yaml</div>
<div class="t" style="top:797.57px;font-size:15.674999999999999px;line-height:20px;color:#262626;left:521.5px;width:600px;text-align:right;transform:scaleX(0.9569377990430623);transform-origin:right center;">448</div>
<div class="t" style="top:797.57px;font-size:15.674999999999999px;line-height:20px;color:#262626;left:1133px;transform:scaleX(0.9569377990430623);transform-origin:left center;">Исход...</div>
<div class="t" style="top:797.57px;font-size:15.674999999999999px;line-height:20px;color:#262626;left:1201.8px;transform:scaleX(0.9569377990430623);transform-origin:left center;">11.09.2025 12:23:11</div>
<div class="t" style="top:797.57px;font-size:15.674999999999999px;line-height:20px;color:#262626;left:1361.7px;transform:scaleX(0.9569377990430623);transform-origin:left center;">-rw-r--...</div>
<div class="t" style="top:797.57px;font-size:15.674999999999999px;line-height:20px;color:#262626;left:1431px;transform:scaleX(1.0765550239234452);transform-origin:left center;">root root</div>
<svg style="position:absolute;left:589px;top:821.35px" width="15" height="18.7"><use href="#yaml" width="15" height="18.7"/></svg>
<div class="t" style="top:822.22px;font-size:15.674999999999999px;line-height:20px;color:#262626;left:609.5px;transform:scaleX(0.9856459330143542);transform-origin:left center;">configuration_backup_v1.yaml</div>
<div class="t" style="top:822.22px;font-size:15.674999999999999px;line-height:20px;color:#262626;left:521.5px;width:600px;text-align:right;transform:scaleX(0.9569377990430623);transform-origin:right center;">278</div>
<div class="t" style="top:822.22px;font-size:15.674999999999999px;line-height:20px;color:#262626;left:1133px;transform:scaleX(0.9569377990430623);transform-origin:left center;">Исход...</div>
<div class="t" style="top:822.22px;font-size:15.674999999999999px;line-height:20px;color:#262626;left:1201.8px;transform:scaleX(0.9569377990430623);transform-origin:left center;">28.08.2025 12:25:01</div>
<div class="t" style="top:822.22px;font-size:15.674999999999999px;line-height:20px;color:#262626;left:1361.7px;transform:scaleX(0.9569377990430623);transform-origin:left center;">-rw-r--...</div>
<div class="t" style="top:822.22px;font-size:15.674999999999999px;line-height:20px;color:#262626;left:1431px;transform:scaleX(1.0765550239234452);transform-origin:left center;">root root</div>
<svg style="position:absolute;left:589px;top:846.0px" width="15" height="18.7"><use href="#yaml" width="15" height="18.7"/></svg>
<div class="t" style="top:846.87px;font-size:15.674999999999999px;line-height:20px;color:#262626;left:609.5px;transform:scaleX(0.9856459330143542);transform-origin:left center;">configuration_backup_v2.yaml</div>
<div class="t" style="top:846.87px;font-size:15.674999999999999px;line-height:20px;color:#262626;left:521.5px;width:600px;text-align:right;transform:scaleX(0.9569377990430623);transform-origin:right center;">278</div>
<div class="t" style="top:846.87px;font-size:15.674999999999999px;line-height:20px;color:#262626;left:1133px;transform:scaleX(0.9569377990430623);transform-origin:left center;">Исход...</div>
<div class="t" style="top:846.87px;font-size:15.674999999999999px;line-height:20px;color:#262626;left:1201.8px;transform:scaleX(0.9569377990430623);transform-origin:left center;">28.08.2025 12:25:01</div>
<div class="t" style="top:846.87px;font-size:15.674999999999999px;line-height:20px;color:#262626;left:1361.7px;transform:scaleX(0.9569377990430623);transform-origin:left center;">-rw-r--...</div>
<div class="t" style="top:846.87px;font-size:15.674999999999999px;line-height:20px;color:#262626;left:1431px;transform:scaleX(1.0765550239234452);transform-origin:left center;">root root</div>
<svg style="position:absolute;left:589px;top:870.65px" width="15" height="18.7"><use href="#yaml" width="15" height="18.7"/></svg>
<div class="t" style="top:871.52px;font-size:15.674999999999999px;line-height:20px;color:#262626;left:609.5px;transform:scaleX(0.9856459330143542);transform-origin:left center;">configuration_backup_v3.yaml</div>
<div class="t" style="top:871.52px;font-size:15.674999999999999px;line-height:20px;color:#262626;left:521.5px;width:600px;text-align:right;transform:scaleX(0.9569377990430623);transform-origin:right center;">278</div>
<div class="t" style="top:871.52px;font-size:15.674999999999999px;line-height:20px;color:#262626;left:1133px;transform:scaleX(0.9569377990430623);transform-origin:left center;">Исход...</div>
<div class="t" style="top:871.52px;font-size:15.674999999999999px;line-height:20px;color:#262626;left:1201.8px;transform:scaleX(0.9569377990430623);transform-origin:left center;">28.08.2025 12:25:01</div>
<div class="t" style="top:871.52px;font-size:15.674999999999999px;line-height:20px;color:#262626;left:1361.7px;transform:scaleX(0.9569377990430623);transform-origin:left center;">-rw-r--...</div>
<div class="t" style="top:871.52px;font-size:15.674999999999999px;line-height:20px;color:#262626;left:1431px;transform:scaleX(1.0765550239234452);transform-origin:left center;">root root</div>
<svg style="position:absolute;left:589px;top:895.3000000000001px" width="15" height="18.7"><use href="#logf" width="15" height="18.7"/></svg>
<div class="t" style="top:896.17px;font-size:15.674999999999999px;line-height:20px;color:#262626;left:609.5px;transform:scaleX(1.0526315789473686);transform-origin:left center;">migration-1-to-2.log</div>
<div class="t" style="top:896.17px;font-size:15.674999999999999px;line-height:20px;color:#262626;left:521.5px;width:600px;text-align:right;transform:scaleX(0.9569377990430623);transform-origin:right center;">192</div>
<div class="t" style="top:896.17px;font-size:15.674999999999999px;line-height:20px;color:#262626;left:1133px;transform:scaleX(0.9569377990430623);transform-origin:left center;">Тексто...</div>
<div class="t" style="top:896.17px;font-size:15.674999999999999px;line-height:20px;color:#262626;left:1201.8px;transform:scaleX(0.9569377990430623);transform-origin:left center;">28.08.2025 12:25:01</div>
<div class="t" style="top:896.17px;font-size:15.674999999999999px;line-height:20px;color:#262626;left:1361.7px;transform:scaleX(0.9569377990430623);transform-origin:left center;">-rw-r--...</div>
<div class="t" style="top:896.17px;font-size:15.674999999999999px;line-height:20px;color:#262626;left:1431px;transform:scaleX(1.0765550239234452);transform-origin:left center;">root root</div>
<svg style="position:absolute;left:589px;top:919.95px" width="15" height="18.7"><use href="#logf" width="15" height="18.7"/></svg>
<div class="t" style="top:920.82px;font-size:15.674999999999999px;line-height:20px;color:#262626;left:609.5px;transform:scaleX(1.0526315789473686);transform-origin:left center;">migration-2-to-3.log</div>
<div class="t" style="top:920.82px;font-size:15.674999999999999px;line-height:20px;color:#262626;left:521.5px;width:600px;text-align:right;transform:scaleX(0.9569377990430623);transform-origin:right center;">183</div>
<div class="t" style="top:920.82px;font-size:15.674999999999999px;line-height:20px;color:#262626;left:1133px;transform:scaleX(0.9569377990430623);transform-origin:left center;">Тексто...</div>
<div class="t" style="top:920.82px;font-size:15.674999999999999px;line-height:20px;color:#262626;left:1201.8px;transform:scaleX(0.9569377990430623);transform-origin:left center;">28.08.2025 12:25:01</div>
<div class="t" style="top:920.82px;font-size:15.674999999999999px;line-height:20px;color:#262626;left:1361.7px;transform:scaleX(0.9569377990430623);transform-origin:left center;">-rw-r--...</div>
<div class="t" style="top:920.82px;font-size:15.674999999999999px;line-height:20px;color:#262626;left:1431px;transform:scaleX(1.0765550239234452);transform-origin:left center;">root root</div>
<svg style="position:absolute;left:589px;top:944.6px" width="15" height="18.7"><use href="#logf" width="15" height="18.7"/></svg>
<div class="t" style="top:945.47px;font-size:15.674999999999999px;line-height:20px;color:#262626;left:609.5px;transform:scaleX(1.0526315789473686);transform-origin:left center;">migration-3-to-4.log</div>
<div class="t" style="top:945.47px;font-size:15.674999999999999px;line-height:20px;color:#262626;left:521.5px;width:600px;text-align:right;transform:scaleX(0.9569377990430623);transform-origin:right center;">120</div>
<div class="t" style="top:945.47px;font-size:15.674999999999999px;line-height:20px;color:#262626;left:1133px;transform:scaleX(0.9569377990430623);transform-origin:left center;">Тексто...</div>
<div class="t" style="top:945.47px;font-size:15.674999999999999px;line-height:20px;color:#262626;left:1201.8px;transform:scaleX(0.9569377990430623);transform-origin:left center;">28.08.2025 12:25:01</div>
<div class="t" style="top:945.47px;font-size:15.674999999999999px;line-height:20px;color:#262626;left:1361.7px;transform:scaleX(0.9569377990430623);transform-origin:left center;">-rw-r--...</div>
<div class="t" style="top:945.47px;font-size:15.674999999999999px;line-height:20px;color:#262626;left:1431px;transform:scaleX(1.0765550239234452);transform-origin:left center;">root root</div>
<div style="left:0px;top:1024px;width:577px;height:30px;background:#f0f0f0"></div>
<div style="left:582px;top:662px;width:918px;height:5.5px;background:#f5f5f5"></div>
<div style="left:582px;top:667.3px;width:918px;height:1.7px;background:#6a6a6a"></div>
<div style="left:583.3px;top:668.8px;width:917px;height:0.5px;background:#fff"></div>
<div style="left:1483px;top:240px;width:17px;height:422px;background:#efefef"></div>
<div style="left:1491px;top:342.7px;width:4.6px;height:281px;background:#858585;border-radius:3px"></div>
<div style="left:0px;top:1024.2px;width:577px;height:1px;background:#e0e0e0"></div>
<div style="left:575.8px;top:1024.2px;width:1px;height:29px;background:#dcdcdc"></div>
<div style="left:0px;top:1052.4px;width:577px;height:1px;background:#dedede"></div>
<div style="left:583.3px;top:1024.2px;width:917px;height:1px;background:#e0e0e0"></div>
<div style="left:583.3px;top:1052.4px;width:917px;height:1px;background:#dedede"></div>
<div class="t" style="top:1029.87px;font-size:15.674999999999999px;line-height:20px;color:#262626;left:3px;transform:scaleX(0.9569377990430623);transform-origin:left center;">55 файлов и 31 каталог. Общий размер: 53 802 915 байт</div>
<div class="t" style="top:1029.87px;font-size:15.674999999999999px;line-height:20px;color:#262626;left:585px;transform:scaleX(0.9569377990430623);transform-origin:left center;">8 файлов и 2 каталога. Общий размер: 3 268 байт</div>
<div class="t" style="top:1063.87px;font-size:15.674999999999999px;line-height:20px;color:#262626;left:5px;transform:scaleX(0.9569377990430623);transform-origin:left center;">Сервер/Локальны...</div>
<div class="t" style="top:1063.87px;font-size:15.674999999999999px;line-height:20px;color:#262626;left:163px;transform:scaleX(0.9569377990430623);transform-origin:left center;">Нап...</div>
<div class="t" style="top:1063.87px;font-size:15.674999999999999px;line-height:20px;color:#262626;left:213px;transform:scaleX(0.9569377990430623);transform-origin:left center;">Файл на сервере</div>
<div class="t" style="top:1063.87px;font-size:15.674999999999999px;line-height:20px;color:#262626;left:376px;transform:scaleX(0.9569377990430623);transform-origin:left center;">Размер</div>
<div class="t" style="top:1063.87px;font-size:15.674999999999999px;line-height:20px;color:#262626;left:439px;transform:scaleX(0.9569377990430623);transform-origin:left center;">При...</div>
<div class="t" style="top:1063.87px;font-size:15.674999999999999px;line-height:20px;color:#262626;left:490px;transform:scaleX(0.9569377990430623);transform-origin:left center;">Состояние</div>
<div style="left:155.5px;top:1058px;width:1px;height:27px;background:#e5e5e5"></div>
<div style="left:207px;top:1058px;width:1px;height:27px;background:#e5e5e5"></div>
<div style="left:362.8px;top:1058px;width:1px;height:27px;background:#e5e5e5"></div>
<div style="left:432.3px;top:1058px;width:1px;height:27px;background:#e5e5e5"></div>
<div style="left:483.9px;top:1058px;width:1px;height:27px;background:#e5e5e5"></div>
<div style="left:613.4px;top:1058px;width:1px;height:27px;background:#e5e5e5"></div>
<div style="left:5.5px;top:1116.7px;width:155px;height:31.5px;background:linear-gradient(#fcfcfc,#f2f2f2);border:1px solid #b9b9b9;border-bottom:none;border-radius:3px 3px 0 0;box-sizing:border-box"></div>
<div style="left:160.5px;top:1117.5px;width:203px;height:30.5px;background:linear-gradient(#ececec 0%,#e4e4e4 50%,#dadada 51%,#d6d6d6 100%);border:1px solid #b9b9b9;border-radius:3px;box-sizing:border-box"></div>
<div style="left:363.5px;top:1117.5px;width:179px;height:30px;background:linear-gradient(#ececec 0%,#e4e4e4 50%,#dadada 51%,#d6d6d6 100%);border:1px solid #b9b9b9;border-radius:3px;box-sizing:border-box"></div>
<div class="t" style="top:1122.67px;font-size:15.674999999999999px;line-height:20px;color:#000;font-weight:700;left:16px;transform:scaleX(0.9808612440191388);transform-origin:left center;">Файлы в задании</div>
<div class="t" style="top:1122.67px;font-size:15.674999999999999px;line-height:20px;color:#262626;left:170px;transform:scaleX(0.9732057416267942);transform-origin:left center;">Неудавшиеся передачи</div>
<div class="t" style="top:1122.67px;font-size:15.674999999999999px;line-height:20px;color:#262626;left:373px;transform:scaleX(0.9808612440191388);transform-origin:left center;">Успешные передачи</div>
<svg style="position:absolute;left:0;top:49px" width="500" height="34" viewBox="0 49 500 34">
<defs>
<linearGradient id="gTow" x1="0" x2="1"><stop offset="0" stop-color="#ffffff"/><stop offset="0.5" stop-color="#ffffff"/><stop offset="0.5" stop-color="#e6e6e6"/><stop offset="1" stop-color="#e0e0e0"/></linearGradient>
</defs>
<!-- site manager -->
<g>
 <rect x="4.6" y="54.5" width="7" height="14" fill="#fff" stroke="#e2e2e2" stroke-width="0.4"/>
 <rect x="20.8" y="54.5" width="7" height="14" fill="#fff" stroke="#e2e2e2" stroke-width="0.4"/>
 <rect x="12.6" y="56" width="7" height="14" fill="#fff" stroke="#e2e2e2" stroke-width="0.4"/>
 <rect x="6" y="55" width="5" height="3" fill="#4a8fd8"/>
 <rect x="22.2" y="55" width="5" height="3" fill="#4a8fd8"/>
 <rect x="14" y="56.6" width="5" height="3" fill="#4a8fd8"/>
 <g fill="#555"><circle cx="8.4" cy="63.5" r="0.6"/><circle cx="24.6" cy="63.5" r="0.6"/><circle cx="16.4" cy="65" r="0.6"/></g>
 <g stroke="#8a7a9a" stroke-width="0.8"><path d="M4.5,68.6 H12 M20.8,68.6 H28.4 M12.6,70.2 H20"/></g>
 <g fill="#3db03a"><circle cx="8.4" cy="68.6" r="1"/><circle cx="24.6" cy="68.6" r="1"/><circle cx="16.4" cy="70.2" r="1"/></g>
 <g stroke="#555" stroke-width="1.3"><path d="M8.4,72.5 V76.3 M16.4,72.5 V76.3 M24.6,72.5 V76.3"/></g>
 <rect x="4.4" y="75.8" width="24.4" height="1.6" fill="#555"/>
</g>
<path d="M39,63.6 H48.5 L43.75,69 Z" fill="#000"/>
<rect x="56.4" y="53" width="0.9" height="27" fill="#8a8a8a"/>
<!-- toggle buttons -->
<g fill="#cde8fc" stroke="#a8d6f8" stroke-width="1">
 <rect x="61.8" y="51.7" width="30.4" height="28.6" rx="3"/>
 <rect x="94.3" y="51.7" width="30.2" height="28.6" rx="3"/>
 <rect x="126.3" y="51.7" width="30.2" height="28.6" rx="3"/>
 <rect x="158.3" y="51.7" width="30.5" height="28.6" rx="3"/>
</g>
<!-- message log -->
<path d="M69,54.2 H83.2 L87.4,58.4 V77.8 H69 Z" fill="#eaeaea"/>
<path d="M83.2,54.2 V58.4 H87.4 Z" fill="#fafafa"/>
<g stroke-width="1.6" stroke-linecap="round">
 <path d="M71.8,57.5 H78.8" stroke="#5a5a5a"/>
 <path d="M71.8,60.8 H75.8" stroke="#2c78c8"/><path d="M78.3,60.8 H82.4" stroke="#4cb33a"/>
 <path d="M71.8,64 H77.4" stroke="#2c78c8"/><path d="M80,64 H84" stroke="#5a5a5a"/>
 <path d="M71.8,67.2 H74.4" stroke="#4cb33a"/><path d="M76.6,67.2 H82.4" stroke="#5a5a5a"/>
 <path d="M71.8,70.4 H82.4" stroke="#2c78c8"/>
 <path d="M71.8,73.6 H79.4" stroke="#5a5a5a"/><path d="M81.2,73.6 H83.8" stroke="#4cb33a"/>
</g>
<!-- local tree -->
<rect x="97" y="55.1" width="24" height="20.8" rx="1" fill="#e3e3e3"/>
<rect x="97" y="55.1" width="24" height="3.2" rx="1" fill="#5c5c5c"/>
<rect x="97" y="58.3" width="11.5" height="4.8" fill="#4cae2a"/>
<rect x="97" y="63.1" width="11.5" height="1.9" fill="#fff"/>
<rect x="97" y="65" width="11.5" height="10.9" fill="#cfe6c6"/>
<rect x="108.5" y="58.3" width="1.6" height="17.6" fill="#fff"/>
<!-- remote tree -->
<rect x="129" y="55.1" width="24.2" height="21" rx="1" fill="#e3e3e3"/>
<rect x="129" y="55.1" width="24.2" height="3.4" rx="1" fill="#5c5c5c"/>
<rect x="140" y="58.5" width="1.8" height="17.6" fill="#fff"/>
<rect x="141.8" y="58.5" width="11.4" height="4.3" fill="#2c78c8"/>
<rect x="141.8" y="62.8" width="11.4" height="2.2" fill="#fff"/>
<rect x="141.8" y="65" width="11.4" height="11.1" fill="#c9d6e3"/>
<!-- queue arrows -->
<path d="M161,57.3 H171.5 L171,54 L177.4,59.4 L171,64.5 L171.5,61.3 H161 Z M171,57.3 H179 L178.6,54 L185,59.4 L178.6,64.5 L179,61.3 H171 Z" fill="#4cb33a"/>
<path d="M185,70 H174.5 L175,67 L168.6,72 L175,77 L174.5,74 H185 Z M175,70 H167 L167.4,67 L161,72 L167.4,77 L167,74 H175 Z" fill="#2c78c8"/>
<rect x="191" y="53" width="0.9" height="26.5" fill="#8a8a8a"/>
<!-- refresh -->
<path d="M199,65 A12,12 0 0 1 218.5,55.8 L222.8,55 L222.8,64.6 L213.5,64.6 L216.6,61.2 A7.2,7.2 0 0 0 203.8,65 Z" fill="#2a73c6"/>
<path d="M223.2,66.3 A12,12 0 0 1 203.6,75.6 L199,76.6 L199,66.5 L208.3,66.5 L205.4,70 A7.2,7.2 0 0 0 218.4,66.3 Z" fill="#4cb030"/>
<!-- process queue -->
<path d="M235,53.8 L238.6,58 H236.8 V59.5 L238.6,62.2 H236.8 V77.5 H233.3 V62.2 H231.5 L233.3,59.5 V58 H231.5 Z" fill="#4cb33a"/>
<path d="M241.5,77.5 L245.2,73 H243.3 V71.5 L245.2,68.8 H243.3 V53.8 H239.8 V68.8 H238 L239.8,71.5 V73 H238 Z" fill="#2c78c8"/>
<g fill="#555">
 <circle cx="249.6" cy="62" r="3.9"/>
 <g stroke="#555" stroke-width="1.7"><path d="M249.6,56.6 V67.4 M244.2,62 H255 M245.8,58.2 L253.4,65.8 M253.4,58.2 L245.8,65.8"/></g>
 <circle cx="251.5" cy="71.4" r="2.6"/>
 <g stroke="#555" stroke-width="1.2"><path d="M251.5,67.8 V75 M247.9,71.4 H255.1 M249,68.9 L254,73.9 M254,68.9 L249,73.9"/></g>
</g>
<circle cx="249.6" cy="62" r="1.7" fill="#f0f0f0"/><circle cx="251.5" cy="71.4" r="1.1" fill="#f0f0f0"/>
<!-- cancel -->
<circle cx="275.2" cy="65.3" r="12" fill="#3c3c3c"/>
<path d="M270.8,60.8 L279.6,69.6 M279.6,60.8 L270.8,69.6" stroke="#fff" stroke-width="2.9"/>
<!-- disconnect -->
<rect x="295" y="54" width="8.3" height="24.5" fill="#fff"/><rect x="303.3" y="54" width="9.4" height="24.5" fill="#e2e2e2"/>
<rect x="295" y="78" width="17.7" height="0.7" fill="#c8c8c8"/>
<path d="M298,57.2 H308 M298,60.3 H308" stroke="#2c78c8" stroke-width="1.3"/>
<circle cx="303.3" cy="73.6" r="0.9" fill="#333"/>
<path d="M310,68 L318.6,76.6 M318.6,68 L310,76.6" stroke="#c8141e" stroke-width="2.6"/>
<!-- reconnect -->
<rect x="327" y="54" width="8.3" height="24.5" fill="#fff"/><rect x="335.3" y="54" width="9.4" height="24.5" fill="#e2e2e2"/>
<rect x="327" y="78" width="17.7" height="0.7" fill="#c8c8c8"/>
<path d="M330,57.2 H340 M330,60.3 H340" stroke="#5a5a5a" stroke-width="1.3"/>
<circle cx="335.2" cy="73.6" r="0.9" fill="#333"/>
<path d="M339.3,72.2 L343.2,76.2 L351,67.8" fill="none" stroke="#808080" stroke-width="2.6"/>
<rect x="358" y="53" width="0.9" height="26.5" fill="#8a8a8a"/>
<!-- filter -->
<rect x="366" y="57" width="24.2" height="17.7" fill="#fff"/>
<rect x="365.8" y="56.5" width="24.5" height="3.6" rx="1.2" fill="#5a5a5a"/>
<g stroke-width="1.5" stroke-linecap="round">
 <path d="M368.5,62.3 H388" stroke="#2c78c8"/>
 <path d="M368.5,65.5 H377" stroke="#d01f26"/>
 <path d="M368.5,68.8 H388" stroke="#3aaa35"/>
 <path d="M368.5,72 H377" stroke="#f7b817"/>
</g>
<rect x="377.3" y="58" width="1.4" height="16.5" fill="#5a5a5a"/>
<!-- search -->
<rect x="411" y="54" width="11" height="11.5" fill="#fff"/>
<path d="M413,56 H416.6" stroke="#d01f26" stroke-width="1.4"/><path d="M413,59 H419.5" stroke="#f7b817" stroke-width="1.4"/><path d="M413,61.7 H418" stroke="#3aaa35" stroke-width="1.4"/>
<rect x="398" y="66.5" width="11.5" height="11.5" fill="#fff"/>
<path d="M399.5,68.8 H403.5" stroke="#f7b817" stroke-width="1.4"/><path d="M399.5,71.7 H405" stroke="#3aaa35" stroke-width="1.4"/><path d="M399.5,74.8 H403.5" stroke="#d01f26" stroke-width="1.4"/>
<circle cx="410" cy="65.5" r="6.8" fill="#e6e6e6" fill-opacity="0.85" stroke="#5a5a5a" stroke-width="1.9"/>
<path d="M414.8,70.5 L421,76.6" stroke="#4a4a4a" stroke-width="2.8" stroke-linecap="round"/>
<!-- sync browse -->
<rect x="443" y="54" width="11" height="11.5" fill="#fff"/>
<rect x="430" y="66.5" width="11.5" height="11.5" fill="#fff"/>
<path d="M434.6,65.3 A6.9,6.9 0 0 1 447.8,62.2 L450.3,59.4 V66.2 H443.6 L445.4,64.2 A3.3,3.3 0 0 0 438,65.3 Z" fill="#44ad30"/>
<path d="M448.4,66.2 A6.9,6.9 0 0 1 435.2,69.3 L432.8,72 V65.4 H439.4 L437.6,67.4 A3.3,3.3 0 0 0 445,66.2 Z" fill="#f7b817"/>
<!-- binoculars -->
<path d="M466.8,55.6 Q468.6,54.6 470,55.6 L470.6,59 L474.3,61.5 L478,59 L478.6,55.6 Q480,54.6 481.8,55.6 L482.6,59 Q486.6,66 486.8,70.5 A6,6 0 0 1 474.3,70.5 A6,6 0 0 1 461.8,70.5 Q462,66 466,59 Z" fill="#555"/>
<circle cx="467.6" cy="70.3" r="4.1" fill="#f7b50c"/>
<circle cx="480.8" cy="70.3" r="4.1" fill="#f7b50c"/>
<path d="M466,69.5 L468,67.4 M479.2,69.5 L481.2,67.4" stroke="#fff" stroke-width="0.9"/>
</svg>
<svg style="position:absolute;left:0;top:0" width="30" height="25" viewBox="0 0 30 25">
<rect x="2.8" y="-2" width="20.5" height="20.3" fill="#b5161b"/>
<text x="4.6" y="15.4" font-family="Liberation Sans" font-weight="700" font-style="italic" font-size="17.5" fill="#fff" letter-spacing="-1.6">Fz</text>
</svg>
<svg style="position:absolute;left:1330px;top:0" width="170" height="25" viewBox="1330 0 170 25">
<path d="M1348.7,8.7 H1361.3" stroke="#8a8a8a" stroke-width="1.1"/>
<rect x="1408.6" y="3.1" width="11.8" height="11.8" rx="1.6" fill="none" stroke="#8a8a8a" stroke-width="1.1"/>
<path d="M1470,2.8 L1482.5,15.2 M1482.5,2.8 L1470,15.2" stroke="#8a8a8a" stroke-width="1.1"/>
</svg>
<svg style="position:absolute;left:1009.7px;top:90.4px" width="24" height="27"><path d="M6.4,10.5 H17.2 L11.8,16.2 Z" fill="#404040"/></svg>
<svg style="position:absolute;left:558px;top:219px" width="14" height="12"><path d="M2,3.2 L7,8.2 L12,3.2" fill="none" stroke="#606060" stroke-width="1"/></svg>
<svg style="position:absolute;left:1486px;top:219px" width="14" height="12"><path d="M2,3.2 L7,8.2 L12,3.2" fill="none" stroke="#606060" stroke-width="1"/></svg>
<svg style="position:absolute;left:68px;top:387.5px" width="14" height="8"><path d="M2,6.8 L7,1.8 L12,6.8" fill="none" stroke="#a0a0a0" stroke-width="1"/></svg>
<svg style="position:absolute;left:803px;top:668.8px" width="14" height="8"><path d="M2,6.8 L7,1.8 L12,6.8" fill="none" stroke="#a0a0a0" stroke-width="1"/></svg>
<div style="left:582.1px;top:785.4px;width:168px;height:40.1px;border:7px solid #e8211d;border-radius:9px;box-sizing:border-box"></div>
</body></html>
